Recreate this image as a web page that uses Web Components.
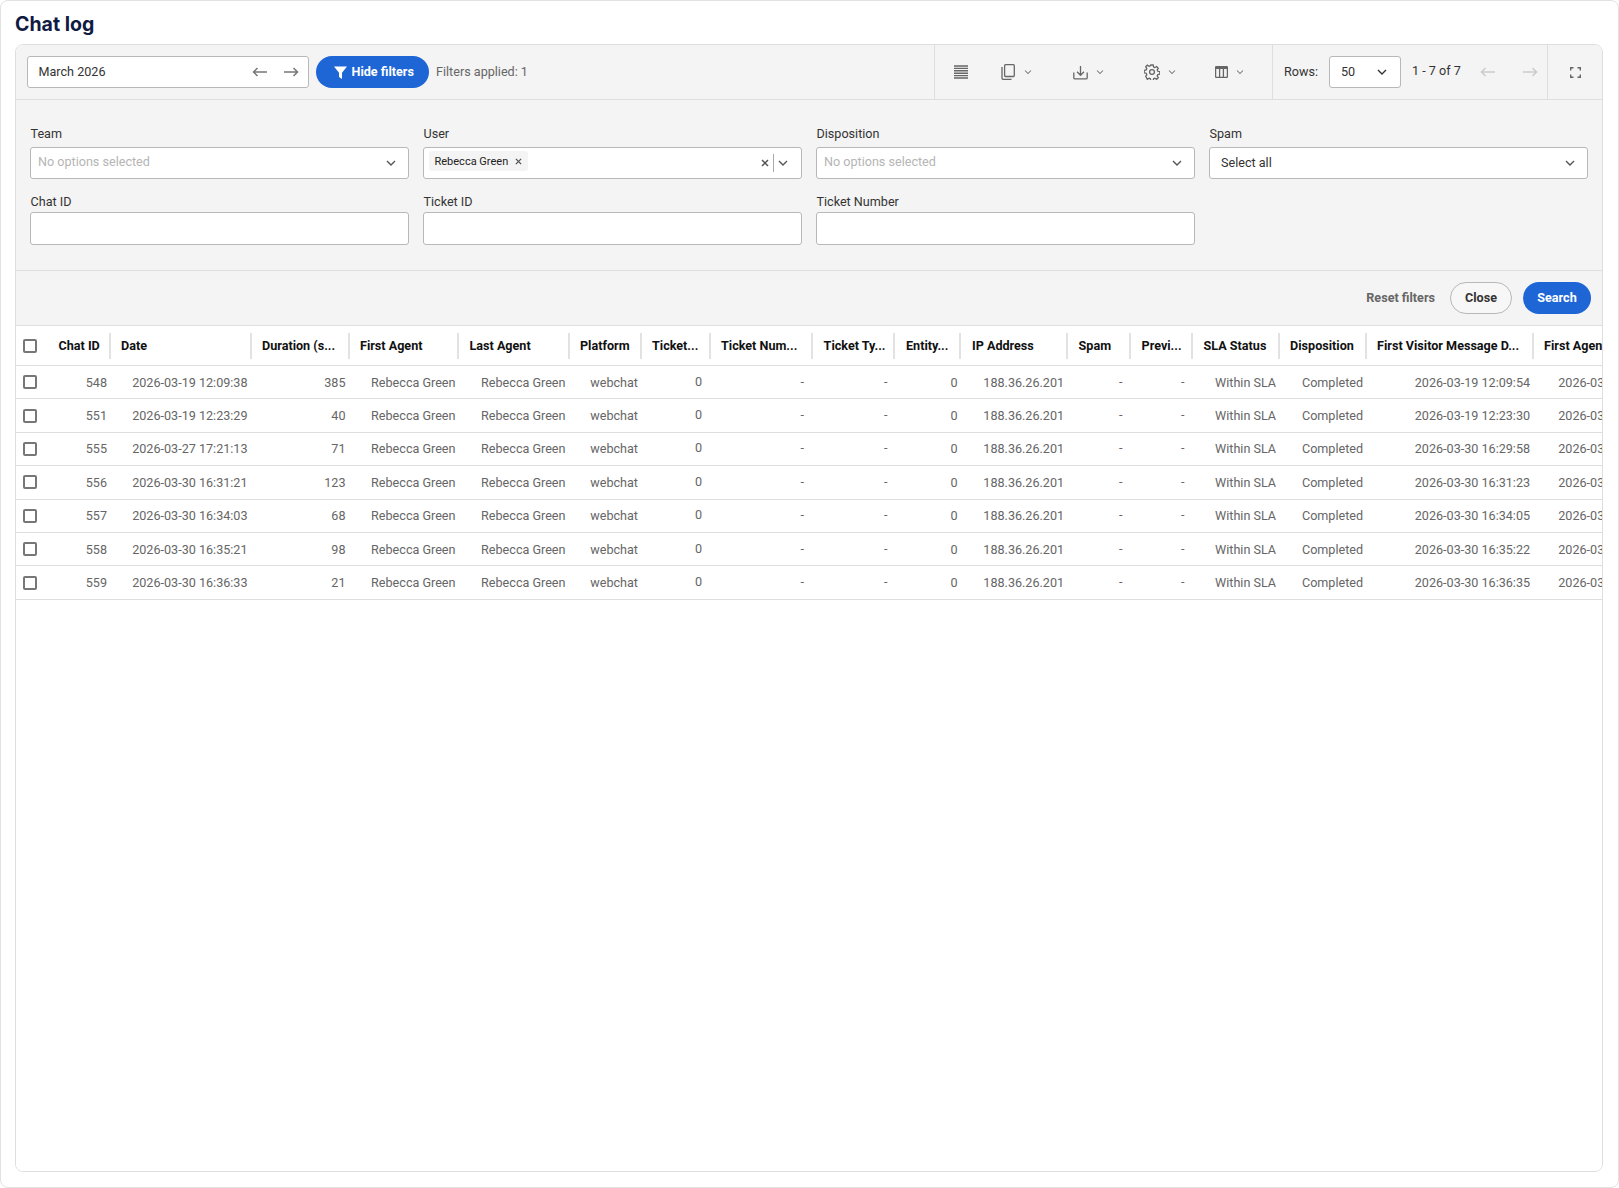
<!DOCTYPE html>
<html>
<head>
<meta charset="utf-8">
<title>Chat log</title>
<style>
    html, body { margin: 0; height: 100%; background: #fff; }
    body { font-family: Roboto, "Liberation Sans", sans-serif; font-size: 12.6px; }
</style>
</head>
<body>
<chat-log-page>
    <log-panel>
        <log-toolbar slot="toolbar"></log-toolbar>
        <log-filters slot="filters"></log-filters>
        <log-table slot="table"></log-table>
    </log-panel>
</chat-log-page>

<script>
const ICONS = {
    chevron: '<svg width="10" height="6" viewBox="0 0 10 6" fill="none" stroke="currentColor" stroke-width="1.4"><path d="M1 1l4 4 4-4"/></svg>',
    arrowLeft: '<svg width="15" height="12" viewBox="0 0 15 12" fill="none" stroke="currentColor" stroke-width="1.5"><path d="M15 6H1.500M5.500 2L1.500 6l4 4"/></svg>',
    arrowRight: '<svg width="15" height="12" viewBox="0 0 15 12" fill="none" stroke="currentColor" stroke-width="1.5"><path d="M0 6h13.500M9.500 2l4 4-4 4"/></svg>',
    funnel: '<svg width="13" height="13" viewBox="0 0 13 13" fill="#fff"><path d="M0 .5h13L8 6.700V13L5 11V6.700z"/></svg>',
    list: '<svg width="14" height="14" viewBox="0 0 14 14" fill="none" stroke="currentColor" stroke-width="1.400"><path d="M0 1h14M0 3.400h14M0 5.800h14M0 8.200h14M0 10.600h14M0 13h14"/></svg>',
    copy: '<svg width="14" height="16" viewBox="0 0 14 16" fill="none" stroke="currentColor" stroke-width="1.300"><rect x="3.600" y=".7" width="9.700" height="11.800" rx="1"/><path d="M1 3v11.300c0 .5.400 1 1 1h8.500"/></svg>',
    download: '<svg width="15" height="15" viewBox="0 0 15 15" fill="none" stroke="currentColor" stroke-width="1.300"><path d="M7.500 1v9M4 6.800l3.500 3.500L11 6.800M.8 7.500v5.200c0 .7.500 1.200 1.200 1.200h11c.7 0 1.200-.5 1.200-1.200V7.500"/></svg>',
    gear: '<svg width="16" height="16" viewBox="0 0 16 16" fill="none" stroke="currentColor" stroke-width="1.300"><circle cx="8" cy="8" r="2.400"/><path d="M6.800 1h2.400l.4 2 1.300.6 1.800-1.100 1.600 1.700-1.100 1.700.6 1.400 2 .4v2.400l-2 .4-.6 1.400 1.100 1.700-1.600 1.700-1.800-1.100-1.300.6-.4 2H6.800l-.4-2-1.300-.6-1.800 1.100L1.700 12.300l1.100-1.700-.6-1.400-2-.4V6.400l2-.4.6-1.400-1.100-1.700L3.300 1.200l1.800 1.100 1.300-.6z"/></svg>',
    columns: '<svg width="13" height="12" viewBox="0 0 13 12" fill="none" stroke="currentColor" stroke-width="1.300"><rect x=".6" y=".6" width="11.800" height="10.800" rx="1"/><path d="M.6 2h11.800" stroke-width="1.800"/><path d="M4.600 2v9M8.400 2v9"/></svg>',
    corners: '<svg width="11" height="11" viewBox="0 0 11 11" fill="none" stroke="currentColor" stroke-width="1.400"><path d="M.7 3.500V.7h2.800M7.500.7h2.800v2.800M10.300 7.500v2.800H7.500M3.500 10.300H.7V7.500"/></svg>',
    cross: '<svg width="8" height="8" viewBox="0 0 8 8" fill="none" stroke="currentColor" stroke-width="1.500"><path d="M1 1l6 6M7 1L1 7"/></svg>'
};

class ChatLogPage extends HTMLElement {
    constructor() {
        super();
        this.attachShadow({ mode: 'open' });
        this.shadowRoot.innerHTML = `
            <style>
                :host {
                    display: flex;
                    flex-direction: column;
                    box-sizing: border-box;
                    height: 1188px;
                    padding: 0 15px 15px 14px;
                    border: 1px solid #e2e2e2;
                    border-radius: 8px;
                    overflow: hidden;
                }
                h1 {
                    margin: 0;
                    height: 43px;
                    line-height: 47px;
                    font-family: Inter, "Liberation Sans", sans-serif;
                    font-size: 19.5px;
                    font-weight: 700;
                    color: #101a42;
                }
            </style>
            <h1>Chat log</h1>
            <slot></slot>
        `;
    }
}

class LogPanel extends HTMLElement {
    constructor() {
        super();
        this.attachShadow({ mode: 'open' });
        this.shadowRoot.innerHTML = `
            <style>
                :host {
                    display: flex;
                    flex-direction: column;
                    flex: 1;
                    min-height: 0;
                    border: 1px solid #dedede;
                    border-radius: 8px;
                    overflow: hidden;
                }
            </style>
            <slot name="toolbar"></slot>
            <slot name="filters"></slot>
            <slot name="table"></slot>
        `;
    }
}

class LogToolbar extends HTMLElement {
    constructor() {
        super();
        this.attachShadow({ mode: 'open' });
        this.shadowRoot.innerHTML = `
            <style>
                :host {
                    display: flex;
                    align-items: stretch;
                    height: 54px;
                    background: #f4f4f4;
                    border-bottom: 1px solid #dedede;
                    color: #333;
                }
                .left { display: flex; align-items: center; flex: 1; min-width: 0; padding-left: 11px; }
                .date {
                    display: flex;
                    align-items: center;
                    flex: none;
                    box-sizing: border-box;
                    width: 282px;
                    height: 32px;
                    padding: 0 9px 0 10.500px;
                    background: #fff;
                    border: 1px solid #b8b8b8;
                    border-radius: 3px;
                    color: #333;
                }
                .date span { flex: 1; position: relative; top: -.5px; }
                .date svg { color: #777; }
                .date svg + svg { margin-left: 17px; }
                .hide {
                    display: flex;
                    align-items: center;
                    gap: 5px;
                    flex: none;
                    box-sizing: border-box;
                    height: 32px;
                    width: 113px;
                    margin-left: 7px;
                    padding-left: 17.500px;
                    border-radius: 16px;
                    background: #1e66d6;
                    color: #fff;
                    font-weight: 700;
                }
                .hide span { position: relative; top: -.5px; }
                .applied { margin-left: 7px; color: #666; white-space: nowrap; position: relative; top: -.5px; }
                .group { display: flex; align-items: center; flex: none; border-left: 1px solid #dedede; }
                .tools { width: 338px; box-sizing: border-box; color: #666; padding-left: 19px; }
                .tool { display: flex; align-items: center; gap: 8px; }
                .tool .chev { display: flex; color: #777; transform: scale(.75); }
                .tool:nth-child(2) { margin-left: 33px; }
                .tool:nth-child(3) { margin-left: 40px; }
                .tool:nth-child(3) .chev { margin-left: -1px; }
                .tool:nth-child(4) { margin-left: 39px; }
                .tool:nth-child(4) .chev { margin-left: -1px; }
                .tool:nth-child(5) { margin-left: 38px; }
                .tool:nth-child(5) .chev { margin-left: -1px; }
                .pager { width: 275px; box-sizing: border-box; padding-left: 11px; color: #333; }
                .pager > span:first-child { position: relative; top: -.5px; }
                .rows {
                    display: flex;
                    align-items: center;
                    justify-content: space-between;
                    box-sizing: border-box;
                    width: 72px;
                    height: 32px;
                    margin-left: 11px;
                    padding: 0 13px 0 11px;
                    background: #fff;
                    border: 1px solid #b8b8b8;
                    border-radius: 3px;
                }
                .rows span { position: relative; top: -.5px; }
                .count { margin-left: 11px; margin-top: -3px; white-space: nowrap; }
                .pager .nav { display: flex; color: #ccc; margin-left: 19px; }
                .pager .nav + .nav { margin-left: 28px; }
                .full { flex: 0 0 55px; box-sizing: border-box; justify-content: center; color: #666; }
            </style>
            <div class="left">
                <div class="date"><span>March 2026</span>${ICONS.arrowLeft}${ICONS.arrowRight}</div>
                <div class="hide">${ICONS.funnel}<span>Hide filters</span></div>
                <div class="applied">Filters applied: 1</div>
            </div>
            <div class="group tools">
                <div class="tool">${ICONS.list}</div>
                <div class="tool">${ICONS.copy}<span class="chev">${ICONS.chevron}</span></div>
                <div class="tool">${ICONS.download}<span class="chev">${ICONS.chevron}</span></div>
                <div class="tool">${ICONS.gear}<span class="chev">${ICONS.chevron}</span></div>
                <div class="tool">${ICONS.columns}<span class="chev">${ICONS.chevron}</span></div>
            </div>
            <div class="group pager">
                <span>Rows:</span>
                <div class="rows"><span>50</span>${ICONS.chevron}</div>
                <span class="count">1 - 7 of 7</span>
                <span class="nav">${ICONS.arrowLeft}</span>
                <span class="nav">${ICONS.arrowRight}</span>
            </div>
            <div class="group full">${ICONS.corners}</div>
        `;
    }
}

// one labelled filter; the control itself comes in through the slot
class FilterField extends HTMLElement {
    constructor() {
        super();
        this.attachShadow({ mode: 'open' });
        this.shadowRoot.innerHTML = `
            <style>
                :host { display: block; min-width: 0; }
                label { display: block; height: 17px; line-height: 17px; color: #333; padding-left: .5px; }
                .box {
                    display: flex;
                    align-items: center;
                    box-sizing: border-box;
                    height: 32px;
                    margin-top: 5px;
                    background: #fff;
                    border: 1px solid #b8b8b8;
                    border-radius: 3px;
                    padding: 0 12px 0 7px;
                }
                :host([plain]) .box { height: 33px; margin-top: 2px; }
            </style>
            <label></label>
            <div class="box"><slot></slot></div>
        `;
    }

    connectedCallback() {
        this.shadowRoot.querySelector('label').textContent = this.getAttribute('label');
    }
}

class FilterSelect extends HTMLElement {
    constructor() {
        super();
        this.attachShadow({ mode: 'open' });
        this.shadowRoot.innerHTML = `
            <style>
                :host {
                    display: flex;
                    align-items: center;
                    justify-content: space-between;
                    flex: 1;
                    min-width: 0;
                    color: #b5b5b5;
                }
                :host([value]) { color: #333; padding-left: 4px; }
                span { position: relative; top: -1.5px; }
                :host([value]) span { top: -.5px; }
                svg { color: #555; }
            </style>
            <span></span>${ICONS.chevron}
        `;
    }

    connectedCallback() {
        this.shadowRoot.querySelector('span').textContent = this.getAttribute('value') || 'No options selected';
    }
}

class UserSelect extends HTMLElement {
    constructor() {
        super();
        this.attachShadow({ mode: 'open' });
        this.shadowRoot.innerHTML = `
            <style>
                :host { display: flex; align-items: center; flex: 1; margin-left: -2.500px; margin-right: 1px; color: #222; }
                .chip {
                    display: flex;
                    align-items: center;
                    gap: 7px;
                    height: 20px;
                    margin-top: -4px;
                    padding: 0 6px;
                    background: #f4f4f4;
                    border-radius: 3px;
                    font-size: 11px;
                }
                .chip svg { color: #555; width: 7px; height: 7px; }
                .clear { margin-left: auto; display: flex; color: #555; }
                .sep { width: 1px; height: 18px; background: #aaa; margin: 0 4px; }
                .chev { display: flex; color: #555; }
            </style>
            <div class="chip"><span>Rebecca Green</span>${ICONS.cross}</div>
            <span class="clear">${ICONS.cross}</span>
            <span class="sep"></span>
            <span class="chev">${ICONS.chevron}</span>
        `;
    }
}

class LogFilters extends HTMLElement {
    constructor() {
        super();
        this.attachShadow({ mode: 'open' });
        this.shadowRoot.innerHTML = `
            <style>
                :host { display: block; background: #f4f4f4; }
                .grid {
                    display: grid;
                    grid-template-columns: repeat(4, 1fr);
                    column-gap: 14px;
                    row-gap: 14px;
                    padding: 25px 14px 25px 14px;
                    border-bottom: 1px solid #dedede;
                }
                .actions {
                    display: flex;
                    align-items: center;
                    justify-content: flex-end;
                    height: 55px;
                    box-sizing: border-box;
                    padding: 0 11px 1px 0;
                    border-bottom: 1px solid #dedede;
                    font-weight: 700;
                }
                .reset { color: #666; margin-right: 15px; }
                .btn {
                    display: flex;
                    align-items: center;
                    justify-content: center;
                    box-sizing: border-box;
                    height: 32px;
                    border-radius: 16px;
                }
                .close { width: 62px; border: 1px solid #b8b8b8; color: #333; background: #f7f7f7; margin-right: 11px; }
                .search { width: 68px; background: #1e66d6; color: #fff; }
            </style>
            <div class="grid">
                <filter-field label="Team"><filter-select></filter-select></filter-field>
                <filter-field label="User"><user-select></user-select></filter-field>
                <filter-field label="Disposition"><filter-select></filter-select></filter-field>
                <filter-field label="Spam"><filter-select value="Select all"></filter-select></filter-field>
                <filter-field plain label="Chat ID"></filter-field>
                <filter-field plain label="Ticket ID"></filter-field>
                <filter-field plain label="Ticket Number"></filter-field>
            </div>
            <div class="actions">
                <span class="reset">Reset filters</span>
                <span class="btn close">Close</span>
                <span class="btn search">Search</span>
            </div>
        `;
    }
}

// [title, width, right padding of the data cell]
const COLUMNS = [
    ['Chat ID', 62.5, 3.5],
    ['Date', 141, 4],
    ['Duration (s...', 98, 4],
    ['First Agent', 109.5, 3.5],
    ['Last Agent', 110.5, 4],
    ['Platform', 72, 3.5],
    ['Ticket...', 69, 8.5],
    ['Ticket Num...', 102.6, 9],
    ['Ticket Ty...', 82.4, 8],
    ['Entity...', 66, 4],
    ['IP Address', 106.6, 4],
    ['Spam', 63, 8.5],
    ['Previ...', 62, 8.5],
    ['SLA Status', 86.5, 3.5],
    ['Disposition', 87, 3.5],
    ['First Visitor Message D...', 167, 3.5],
    ['First Agent Message Date', 143, 3]
];

const CHATS = [
    [548, '2026-03-19 12:09:38', 385, '2026-03-19 12:09:54', '2026-03-19 12:10:02'],
    [551, '2026-03-19 12:23:29', 40, '2026-03-19 12:23:30', '2026-03-19 12:23:41'],
    [555, '2026-03-27 17:21:13', 71, '2026-03-30 16:29:58', '2026-03-30 16:30:06'],
    [556, '2026-03-30 16:31:21', 123, '2026-03-30 16:31:23', '2026-03-30 16:31:35'],
    [557, '2026-03-30 16:34:03', 68, '2026-03-30 16:34:05', '2026-03-30 16:34:14'],
    [558, '2026-03-30 16:35:21', 98, '2026-03-30 16:35:22', '2026-03-30 16:35:33'],
    [559, '2026-03-30 16:36:33', 21, '2026-03-30 16:36:35', '2026-03-30 16:36:42']
];

class LogTable extends HTMLElement {
    constructor() {
        super();
        this.attachShadow({ mode: 'open' });
        const columns = `32px ${COLUMNS.map(c => c[1] + 'px').join(' ')}`;
        const rows = CHATS.map(chat => {
            const cells = [chat[0], chat[1], chat[2], 'Rebecca Green', 'Rebecca Green', 'webchat', 0, '-', '-', 0,
                '188.36.26.201', '-', '-', 'Within SLA', 'Completed', chat[3], chat[4]];
            return `
                <div class="row">
                    <div class="check"><span class="box"></span></div>
                    ${cells.map((value, i) => `<div class="cell${i === 6 || value === '-' ? ' up' : ''}" style="padding-right:${COLUMNS[i][2]}px">${value}</div>`).join('')}
                </div>`;
        }).join('');
        this.shadowRoot.innerHTML = `
            <style>
                :host { display: block; flex: 1; background: #fff; overflow: hidden; }
                .row, .head {
                    display: grid;
                    grid-template-columns: ${columns};
                    box-sizing: border-box;
                    border-bottom: 1px solid #dedede;
                    white-space: nowrap;
                }
                .head { height: 40px; align-items: center; font-weight: 700; color: #111; }
                .row { height: 33.4px; align-items: center; color: #666; }
                .check { display: flex; padding-left: 7px; }
                .box {
                    box-sizing: border-box;
                    width: 14px;
                    height: 14px;
                    border: 2px solid #777;
                    border-radius: 2px;
                    background: #fff;
                }
                .title {
                    display: flex;
                    align-items: center;
                    height: 26px;
                    padding-left: 10.5px;
                    border-right: 2px solid #e2e2e2;
                    overflow: hidden;
                }
                .title:last-child { border-right: 0; }
                .cell { text-align: right; overflow: hidden; }
                .cell.up { position: relative; top: -1px; }
            </style>
            <div class="head">
                <div class="check"><span class="box"></span></div>
                ${COLUMNS.map(c => `<div class="title">${c[0]}</div>`).join('')}
            </div>
            ${rows}
        `;
    }
}

customElements.define('chat-log-page', ChatLogPage);
customElements.define('log-panel', LogPanel);
customElements.define('log-toolbar', LogToolbar);
customElements.define('filter-field', FilterField);
customElements.define('filter-select', FilterSelect);
customElements.define('user-select', UserSelect);
customElements.define('log-filters', LogFilters);
customElements.define('log-table', LogTable);
</script>
</body>
</html>
